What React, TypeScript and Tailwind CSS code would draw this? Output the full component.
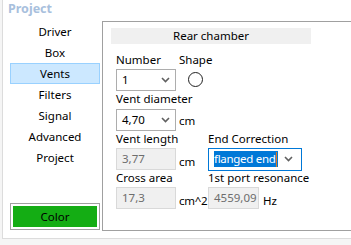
import React from 'react';

const NAV = ['Driver', 'Box', 'Vents', 'Filters', 'Signal', 'Advanced', 'Project'];

function Chevron() {
  return (
    <svg width="9" height="6" viewBox="0 0 9 6" className="shrink-0">
      <polyline points="1,1 4.5,4.5 8,1" fill="none" stroke="#606060" strokeWidth="1.6" />
    </svg>
  );
}

function Combo({ value, width }: { value: string; width: string }) {
  return (
    <div className={`flex h-[22px] ${width} shrink-0 items-center justify-between border border-[#adadad] bg-white pl-[5px] pr-[5px]`}>
      <span className="text-black">{value}</span>
      <Chevron />
    </div>
  );
}

function ReadOnly({ value, width }: { value: string; width: string }) {
  return (
    <div className={`flex h-[22px] ${width} shrink-0 items-center border border-[#d9d9d9] bg-[#f0f0f0] pl-[5px] text-[#6d6d6d]`}>
      {value}
    </div>
  );
}

export default function App() {
  return (
    <div className="h-[245px] w-[351px] overflow-hidden bg-[#f5f5f5] font-['Noto_Sans',sans-serif] text-[11.5px] leading-[16px] text-black">
      <div className="ml-[2px] h-[239px] border-b border-l border-[#dcdcdc] bg-white">
        <div className="h-[21px] pl-[5px] pt-[1px] text-[12.5px] font-bold text-[#a8c0dd]">Project</div>
        <div className="flex">
          {/* left nav */}
          <div className="ml-[7px] flex h-[210px] w-[90px] shrink-0 flex-col">
            {NAV.map((n) => (
              <div
                key={n}
                className={
                  'flex h-[21px] items-center justify-center ' +
                  (n === 'Vents' ? 'border border-[#99d1ff] bg-[#cce8ff]' : '')
                }
              >
                {n}
              </div>
            ))}
            <div className="mt-auto mb-[1px] h-[27px] border border-[#a0a0a0] p-[2px]">
              <div className="flex h-full items-center justify-center bg-[#14ad14]">Color</div>
            </div>
          </div>

          {/* right panel */}
          <div className="ml-[2px] h-[210px] w-[300px] shrink-0 border-y border-l border-[#a0a0a0] pl-[8px] pt-[6px]">
            <div className="flex h-[16px] w-[200px] items-center justify-center bg-[#f0f0f0]">Rear chamber</div>

            <div className="ml-[5px] mt-[8px]">
              <div className="flex h-[16px]">
                <span className="w-[63px]">Number</span>
                <span>Shape</span>
              </div>
              <div className="flex h-[23px] items-center">
                <Combo value="1" width="w-[60px]" />
                <div className="ml-[12px] h-[15px] w-[15px] rounded-full border border-[#202020]" />
              </div>
              <div className="flex h-[16px] items-end">Vent diameter</div>
              <div className="mt-[1px] flex h-[23px] items-center">
                <Combo value="4,70" width="w-[60px]" />
                <span className="ml-[3px] mt-[3px]">cm</span>
              </div>
              <div className="flex h-[16px]">
                <span className="w-[92px]">Vent length</span>
                <span>End Correction</span>
              </div>
              <div className="mt-[1px] flex h-[22px] items-center">
                <ReadOnly value="3,77" width="w-[60px]" />
                <span className="ml-[3px] mt-[6px] w-[29px] shrink-0">cm</span>
                <div className="flex h-[23px] w-[94px] shrink-0 items-center justify-between border border-[#0078d7] bg-white pl-[5px] pr-[8px]">
                  <span className="flex h-[16px] items-center whitespace-nowrap bg-[#0078d7] pr-[1px] tracking-[-0.3px] text-white">
                    flanged end
                    <span className="ml-[1px] h-[15px] w-[1px] bg-[#e0771a]" />
                  </span>
                  <Chevron />
                </div>
              </div>
              <div className="flex h-[16px]">
                <span className="w-[92px]">Cross area</span>
                <span>1st port resonance</span>
              </div>
              <div className="mt-[1px] flex h-[22px] items-center">
                <ReadOnly value="17,3" width="w-[60px]" />
                <span className="ml-[3px] mt-[6px] w-[29px] shrink-0 tracking-[-0.3px]">cm^2</span>
                <ReadOnly value="4559,09" width="w-[51px]" />
                <span className="ml-[4px] mt-[6px]">Hz</span>
              </div>
            </div>
          </div>
        </div>
      </div>
    </div>
  );
}
